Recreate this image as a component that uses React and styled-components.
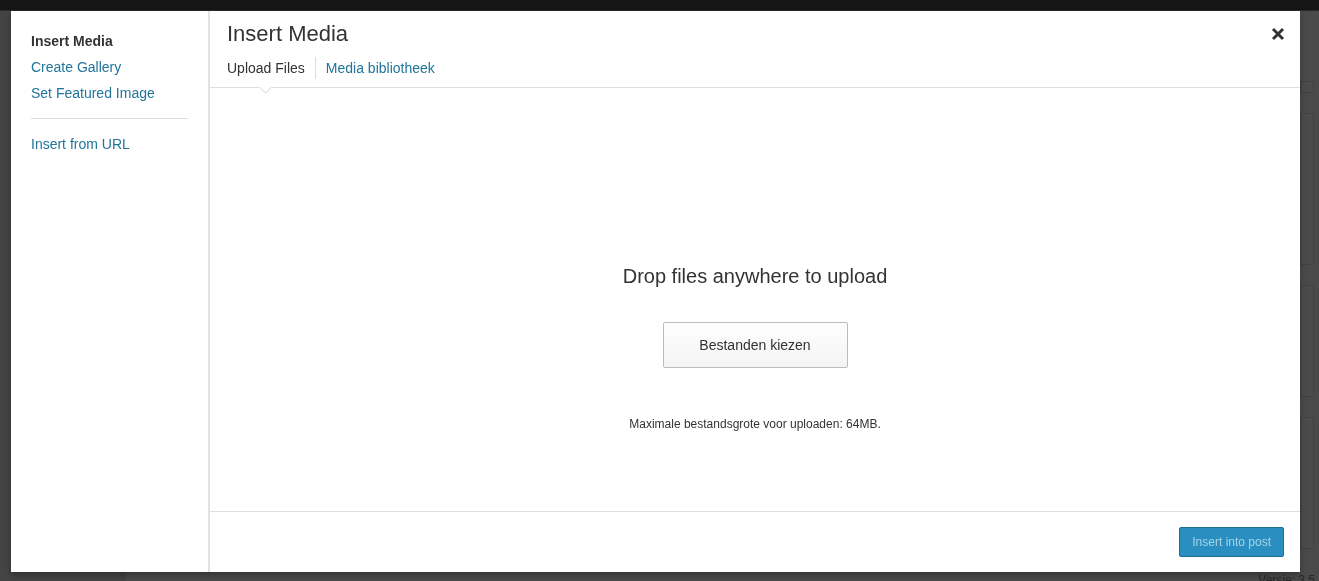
import styled, { createGlobalStyle } from "styled-components";

const GlobalStyle = createGlobalStyle`
  html, body {
    margin: 0;
    padding: 0;
    height: 100%;
    overflow: hidden;
  }
  body {
    font-family: "Liberation Sans", Arial, sans-serif;
    background: #4a4a4a;
  }
`;

/* dimmed admin screen behind the modal */
const Backdrop = styled.div`
  display: flex;
  flex-direction: column;
  height: 581px;
`;

const AdminBar = styled.div`
  height: 10px;
  background: #151515;
  border-bottom: 1px solid #2a2a2a;
`;

const AdminBody = styled.div`
  flex: 1;
  display: flex;
`;

const AdminMenu = styled.div`
  width: 126px;
  background: #444;
`;

const AdminContent = styled.div`
  flex: 1;
  display: flex;
  justify-content: flex-end;
  position: relative;
`;

const SideBoxes = styled.div`
  width: 14px;
  margin-right: 5px;
  padding-top: 70px;
  display: flex;
  flex-direction: column;
  gap: 20px;
`;

const SideBox = styled.div`
  height: ${(p) => p.$h}px;
  border: 1px solid #424242;
  background: #4b4b4b;
`;

const Version = styled.div`
  position: absolute;
  right: 4px;
  bottom: -6px;
  font-size: 12px;
  color: #262626;
`;

const Modal = styled.div`
  position: fixed;
  left: 11px;
  top: 11px;
  width: 1289px;
  height: 561px;
  background: #fff;
  display: flex;
  box-shadow: 0 3px 6px rgba(0, 0, 0, 0.3);
`;

const Sidebar = styled.nav`
  width: 199px;
  box-sizing: border-box;
  border-right: 2px solid #e2e2e2;
  padding: 17px 20px 0 20px;
  display: flex;
  flex-direction: column;
`;

const MenuItem = styled.a`
  display: block;
  font-size: 14px;
  line-height: 26px;
  color: ${(p) => (p.$active ? "#333" : "#21759b")};
  font-weight: ${(p) => (p.$active ? "bold" : "normal")};
  text-decoration: none;
  cursor: pointer;
`;

const MenuSeparator = styled.hr`
  border: none;
  border-top: 1px solid #ddd;
  margin: 12px 1px 12px 0;
  width: 157px;
`;

const Main = styled.div`
  flex: 1;
  display: flex;
  flex-direction: column;
`;

const Header = styled.header`
  position: relative;
  box-sizing: border-box;
  height: 77px;
  padding: 10px 16px 0 17px;
  border-bottom: 1px solid #ddd;

  /* notch under the active tab */
  &::after {
    content: "";
    position: absolute;
    left: 51px;
    bottom: -5px;
    width: 8px;
    height: 8px;
    background: #fff;
    border-right: 1px solid #ddd;
    border-bottom: 1px solid #ddd;
    transform: rotate(45deg);
  }
`;

const Title = styled.h1`
  margin: 0;
  font-size: 22px;
  font-weight: normal;
  color: #333;
  line-height: 26px;
`;

const Close = styled.button`
  position: absolute;
  right: 15px;
  top: 16px;
  border: none;
  background: none;
  padding: 0;
  cursor: pointer;
  display: flex;
`;

const Tabs = styled.div`
  display: flex;
  align-items: center;
  margin-top: 10px;
`;

const Tab = styled.a`
  font-size: 14px;
  line-height: 22px;
  padding: 0 10px;
  color: ${(p) => (p.$active ? "#333" : "#21759b")};
  text-decoration: none;
  cursor: pointer;

  &:first-child {
    padding-left: 0;
    border-right: 1px solid #ddd;
  }
`;

const Uploader = styled.section`
  flex: 1;
  display: flex;
  flex-direction: column;
  align-items: center;
  padding-top: 176px;
  border-bottom: 1px solid #ddd;
`;

const DropText = styled.h2`
  margin: 0;
  font-size: 20px;
  font-weight: normal;
  color: #333;
  line-height: 24px;
`;

const SelectButton = styled.button`
  margin-top: 34px;
  width: 185px;
  height: 46px;
  font-family: inherit;
  font-size: 14px;
  color: #333;
  background: linear-gradient(#fefefe, #f4f4f4);
  border: 1px solid #bbb;
  border-radius: 2px;
  cursor: pointer;
`;

const MaxSize = styled.p`
  margin: 49px 0 0 0;
  font-size: 12px;
  color: #333;
`;

const Toolbar = styled.footer`
  height: 60px;
  display: flex;
  align-items: center;
  justify-content: flex-end;
  padding: 0 16px;
`;

const PrimaryButton = styled.button`
  height: 30px;
  padding: 0 12px;
  font-family: inherit;
  font-size: 12px;
  color: #a3d3ea;
  background: #2a8fc0;
  border: 1px solid #1e6d93;
  border-radius: 2px;
  margin-bottom: 1px;
`;

const CloseIcon = () => (
  <svg width="14" height="14" viewBox="0 0 14 14">
    <path d="M2 2 L12 12 M12 2 L2 12" stroke="#333" strokeWidth="3" />
  </svg>
);

export default function App() {
  return (
    <>
      <GlobalStyle />
      <Backdrop>
        <AdminBar />
        <AdminBody>
          <AdminMenu />
          <AdminContent>
            <SideBoxes>
              <SideBox $h={10} />
              <SideBox $h={150} />
              <SideBox $h={110} />
              <SideBox $h={130} />
            </SideBoxes>
            <Version>Versie: 3.5</Version>
          </AdminContent>
        </AdminBody>
      </Backdrop>

      <Modal>
        <Sidebar>
          <MenuItem $active>Insert Media</MenuItem>
          <MenuItem>Create Gallery</MenuItem>
          <MenuItem>Set Featured Image</MenuItem>
          <MenuSeparator />
          <MenuItem>Insert from URL</MenuItem>
        </Sidebar>
        <Main>
          <Header>
            <Title>Insert Media</Title>
            <Close aria-label="Close">
              <CloseIcon />
            </Close>
            <Tabs>
              <Tab $active>Upload Files</Tab>
              <Tab>Media bibliotheek</Tab>
            </Tabs>
          </Header>
          <Uploader>
            <DropText>Drop files anywhere to upload</DropText>
            <SelectButton>Bestanden kiezen</SelectButton>
            <MaxSize>Maximale bestandsgrote voor uploaden: 64MB.</MaxSize>
          </Uploader>
          <Toolbar>
            <PrimaryButton>Insert into post</PrimaryButton>
          </Toolbar>
        </Main>
      </Modal>
    </>
  );
}
